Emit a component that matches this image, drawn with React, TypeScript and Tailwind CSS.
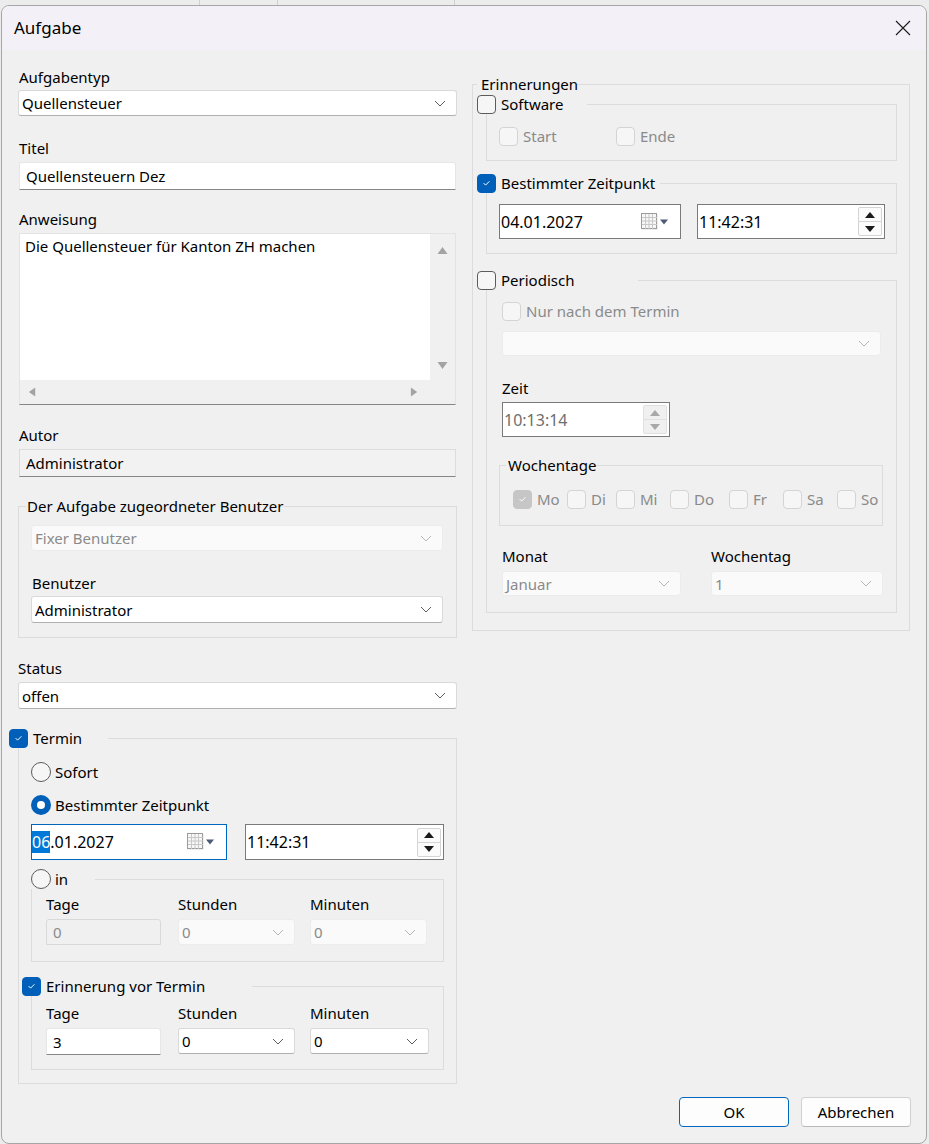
import type { ReactNode } from 'react'

function Chevron({ disabled = false }: { disabled?: boolean }) {
  return (
    <svg viewBox="0 0 12 7" className="h-[7px] w-[12px]" fill="none" stroke={disabled ? '#b8b8b8' : '#5c5c5c'} strokeWidth={1}>
      <path d="M1 1l5 5 5-5" />
    </svg>
  )
}

function Label({ children, className = '' }: { children: ReactNode; className?: string }) {
  return <div className={`h-[20px] leading-[20px] ${className}`}>{children}</div>
}

function Select({ value, disabled = false, className = '' }: { value?: string; disabled?: boolean; className?: string }) {
  return (
    <div
      className={[
        'flex items-center justify-between rounded-[3px] border pl-[3px] pr-[10px] leading-[20px]',
        disabled ? 'border-[#ececec] bg-[#fafafa] text-[#8a8a8a]' : 'border-[#d9d9d9] border-b-[#b0b0b0] bg-white',
        className,
      ].join(' ')}
    >
      <span>{value}</span>
      <Chevron disabled={disabled} />
    </div>
  )
}

function Checkbox({ checked = false, disabled = false }: { checked?: boolean; disabled?: boolean }) {
  const box = checked
    ? disabled
      ? 'border-[#c6c6c6] bg-[#c6c6c6]'
      : 'border-[#005fb8] bg-[#005fb8]'
    : disabled
      ? 'border-[#d4d4d4] bg-[#f6f6f6]'
      : 'border-[#5c5c5c] bg-[#f6f6f6]'
  return (
    <span className={`flex h-[19px] w-[19px] shrink-0 items-center justify-center rounded-[4px] border ${box}`}>
      {checked && (
        <svg viewBox="0 0 19 19" className="h-[19px] w-[19px]" fill="none" stroke="white" strokeWidth={1.1} strokeLinecap="round" strokeLinejoin="round">
          <path d="M6.6 9.4l1.9 1.9 3.9-3.9" />
        </svg>
      )}
    </span>
  )
}

function Radio({ checked = false }: { checked?: boolean }) {
  if (checked) {
    return (
      <span className="flex h-[20px] w-[20px] shrink-0 items-center justify-center rounded-full bg-[#005fb8]">
        <span className="h-[8px] w-[8px] rounded-full bg-white" />
      </span>
    )
  }
  return <span className="h-[20px] w-[20px] shrink-0 rounded-full border border-[#5c5c5c] bg-[#f6f6f6]" />
}

function Group({ title, titleClass = '', className = '', children }: { title: ReactNode; titleClass?: string; className?: string; children: ReactNode }) {
  return (
    <div className={`border border-[#dcdcdc] ${className}`}>
      <div className={`-mt-[11px] flex h-[20px] items-center whitespace-nowrap bg-[#f0f0f0] leading-[20px] ${titleClass}`}>{title}</div>
      {children}
    </div>
  )
}

function Spinner({ disabled = false }: { disabled?: boolean }) {
  const tri = disabled ? '#a8a8a8' : '#1a1a1a'
  const btn = disabled
    ? 'flex h-[15px] w-[24px] items-center justify-center border border-[#e0e0e0] bg-[#f0f0f0]'
    : 'flex h-[15px] w-[24px] items-center justify-center border border-[#d4d4d4] bg-[#fbfbfb]'
  return (
    <div className="flex flex-col">
      <div className={`${btn} rounded-t-[2px]`}>
        <svg viewBox="0 0 10 6" className="h-[6px] w-[10px]">
          <path d="M0 6L5 0L10 6Z" fill={tri} />
        </svg>
      </div>
      <div className={`${btn} -mt-px rounded-b-[2px]`}>
        <svg viewBox="0 0 10 6" className="h-[6px] w-[10px]">
          <path d="M0 0L10 0L5 6Z" fill={tri} />
        </svg>
      </div>
    </div>
  )
}

function TimeField({ value, disabled = false, className = '' }: { value: string; disabled?: boolean; className?: string }) {
  return (
    <div className={`flex items-center justify-between border border-[#7a7a7a] bg-white pl-[1px] pr-[2px] text-[16px] ${disabled ? 'text-[#6e6e6e]' : ''} ${className}`}>
      <span>{value}</span>
      <Spinner disabled={disabled} />
    </div>
  )
}

function CalendarIcon() {
  return (
    <svg viewBox="0 0 28 18" className="h-[18px] w-[28px]">
      <rect x="1.5" y="1.5" width="15" height="15" fill="#9a9a9a" opacity="0.35" />
      <rect x="0.5" y="0.5" width="15" height="15" fill="#f7f7f7" stroke="#9b9b9b" />
      <path d="M4.5 1v15M8 1v15M11.5 1v15M1 4.5h15M1 8h15M1 11.5h15" stroke="#c8c8c8" strokeWidth={1} />
      <path d="M19 6.5h8l-4 5z" fill="#4d5a78" />
    </svg>
  )
}

function DateField({ focused = false, className = '', children }: { focused?: boolean; className?: string; children: ReactNode }) {
  return (
    <div className={`flex items-center justify-between border bg-white pr-[11px] text-[16px] ${focused ? 'border-[#0067c0]' : 'border-[#7a7a7a] pl-[1px]'} ${className}`}>
      <span>{children}</span>
      <CalendarIcon />
    </div>
  )
}

function TextInput({ value, disabled = false, className = '' }: { value: string; disabled?: boolean; className?: string }) {
  return (
    <div
      className={[
        'flex items-center rounded-t-[3px] border pl-[6px] leading-[20px]',
        disabled ? 'border-[#d9d9d9] bg-[#f0f0f0] text-[#8a8a8a]' : 'border-[#e6e6e6] border-b-[#868686] bg-white',
        className,
      ].join(' ')}
    >
      {value}
    </div>
  )
}

function Arrow({ d, className }: { d: string; className: string }) {
  return (
    <svg viewBox="0 0 10 10" className={className}>
      <path d={d} fill="#a3a3a3" />
    </svg>
  )
}

function DurationRow({ disabled = false, minWide = false }: { disabled?: boolean; minWide?: boolean }) {
  return (
    <div className="pl-[14px]">
      <div className="flex">
        <Label className="w-[132px]">Tage</Label>
        <Label className="w-[132px]">Stunden</Label>
        <Label>Minuten</Label>
      </div>
      <div className="mt-[5px] flex">
        <TextInput value={disabled ? '0' : '3'} disabled={disabled} className={disabled ? 'h-[26px] w-[115px]' : 'h-[27px] w-[115px]'} />
        <Select value="0" disabled={disabled} className="ml-[17px] h-[26px] w-[117px]" />
        <Select value="0" disabled={disabled} className={minWide ? 'ml-[15px] h-[26px] w-[119px]' : 'ml-[15px] h-[26px] w-[117px]'} />
      </div>
    </div>
  )
}

function LeftColumn() {
  return (
    <div className="flex w-[439px] shrink-0 flex-col">
      <Label className="pl-[1px]">Aufgabentyp</Label>
      <Select value="Quellensteuer" className="mt-[3px] h-[26px]" />

      <Label className="mt-[22px] pl-[1px]">Titel</Label>
      <TextInput value="Quellensteuern Dez" className="ml-[1px] mr-[1px] mt-[4px] h-[28px]" />

      <Label className="mt-[19px] pl-[1px]">Anweisung</Label>
      <div className="ml-[1px] mr-[1px] mt-[4px] flex h-[172px] flex-col border border-[#e3e3e3] border-b-[#868686] bg-[#f0f0f0]">
        <div className="flex min-h-0 flex-1">
          <div className="flex-1 bg-white pl-[5px] pt-[2px] leading-[20px]">Die Quellensteuer für Kanton ZH machen</div>
          <div className="flex w-[25px] flex-col items-center justify-between pb-[10px] pt-[12px]">
            <Arrow d="M0 8L5 1L10 8Z" className="h-[10px] w-[11px]" />
            <Arrow d="M0 2L10 2L5 9Z" className="h-[10px] w-[11px]" />
          </div>
        </div>
        <div className="flex h-[24px] items-center justify-between pl-[8px] pr-[36px]">
          <Arrow d="M8 0L8 10L1 5Z" className="h-[10px] w-[9px]" />
          <Arrow d="M1 0L1 10L8 5Z" className="h-[10px] w-[9px]" />
        </div>
      </div>

      <Label className="mt-[20px] pl-[1px]">Autor</Label>
      <div className="ml-[1px] mr-[1px] mt-[4px] flex h-[28px] items-center border border-[#dcdcdc] border-b-[#868686] bg-[#f2f2f2] pl-[6px]">Administrator</div>

      <Group
        className="mt-[29px] pb-[14px] pl-[12px] pr-[13px]"
        titleClass="-ml-[5px] w-[258px] pl-[1px]"
        title="Der Aufgabe zugeordneter Benutzer"
      >
        <Select value="Fixer Benutzer" disabled className="mt-[9px] h-[26px]" />
        <Label className="mt-[22px] pl-[1px]">Benutzer</Label>
        <Select value="Administrator" className="mt-[3px] h-[27px]" />
      </Group>

      <Label className="mt-[20px]">Status</Label>
      <Select value="offen" className="mt-[4px] h-[27px]" />

      <Group
        className="mt-[29px] pb-[13px] pl-[12px] pr-[12px]"
        titleClass="-ml-[22px] w-[99px] gap-[5px]"
        title={
          <>
            <Checkbox checked />
            <span>Termin</span>
          </>
        }
      >
        <div className="mt-[14px] flex h-[20px] items-center gap-[4px]">
          <Radio />
          <span>Sofort</span>
        </div>
        <div className="mt-[13px] flex h-[20px] items-center gap-[4px]">
          <Radio checked />
          <span>Bestimmter Zeitpunkt</span>
        </div>
        <div className="mt-[9px] flex gap-[18px]">
          <DateField focused className="h-[36px] w-[196px]">
            <span className="bg-[#0078d7] text-white">06</span>.01.2027
          </DateField>
          <TimeField value="11:42:31" className="h-[36px] flex-1" />
        </div>

        <Group
          className="mt-[19px] pb-[16px]"
          titleClass="-ml-[1px] w-[64px] gap-[4px]"
          title={
            <>
              <Radio />
              <span>in</span>
            </>
          }
        >
          <div className="mt-[5px]">
            <DurationRow disabled />
          </div>
        </Group>

        <Group
          className="mt-[24px] pb-[14px]"
          titleClass="-ml-[10px] w-[230px] gap-[5px]"
          title={
            <>
              <Checkbox checked />
              <span>Erinnerung vor Termin</span>
            </>
          }
        >
          <div className="mt-[7px]">
            <DurationRow minWide />
          </div>
        </Group>
      </Group>
    </div>
  )
}

const DAYS: { name: string; width: string; checked?: boolean }[] = [
  { name: 'Mo', width: 'w-[54px]', checked: true },
  { name: 'Di', width: 'w-[49px]' },
  { name: 'Mi', width: 'w-[54px]' },
  { name: 'Do', width: 'w-[59px]' },
  { name: 'Fr', width: 'w-[54px]' },
  { name: 'Sa', width: 'w-[54px]' },
  { name: 'So', width: 'w-[40px]' },
]

function RightColumn() {
  return (
    <div className="w-[438px] shrink-0">
      <Group className="mt-[17px] pb-[17px]" titleClass="ml-[4px] w-[100px] pl-[4px]" title="Erinnerungen">
        <Group
          className="ml-[13px] mr-[12px] mt-[10px] pb-[14px] pl-[12px]"
          titleClass="-ml-[22px] w-[110px] gap-[5px]"
          title={
            <>
              <Checkbox />
              <span>Software</span>
            </>
          }
        >
          <div className="mt-[12px] flex h-[20px] items-center">
            <div className="flex w-[117px] items-center gap-[5px] text-[#8a8a8a]">
              <Checkbox disabled />
              <span>Start</span>
            </div>
            <div className="flex items-center gap-[5px] text-[#8a8a8a]">
              <Checkbox disabled />
              <span>Ende</span>
            </div>
          </div>
        </Group>

        <Group
          className="ml-[13px] mr-[12px] mt-[22px] pb-[14px] pl-[12px]"
          titleClass="-ml-[22px] w-[183px] gap-[5px]"
          title={
            <>
              <Checkbox checked />
              <span>Bestimmter Zeitpunkt</span>
            </>
          }
        >
          <div className="mt-[11px] flex gap-[16px]">
            <DateField className="h-[35px] w-[182px]">04.01.2027</DateField>
            <TimeField value="11:42:31" className="h-[35px] w-[188px]" />
          </div>
        </Group>

        <Group
          className="ml-[13px] mr-[12px] mt-[26px] pb-[16px] pl-[15px] pr-[15px]"
          titleClass="-ml-[25px] w-[161px] gap-[5px]"
          title={
            <>
              <Checkbox />
              <span>Periodisch</span>
            </>
          }
        >
          <div className="mt-[11px] flex h-[20px] items-center gap-[5px] text-[#8a8a8a]">
            <Checkbox disabled />
            <span>Nur nach dem Termin</span>
          </div>
          <Select disabled className="mt-[10px] h-[25px]" />
          <Label className="mt-[22px]">Zeit</Label>
          <TimeField value="10:13:14" disabled className="mt-[4px] h-[35px] w-[168px]" />

          <Group className="-ml-[3px] -mr-[2px] mt-[28px] pb-[16px] pl-[13px]" titleClass="-ml-[7px] w-[88px] pl-[2px]" title="Wochentage">
            <div className="mt-[14px] flex h-[20px] items-center">
              {DAYS.map((d) => (
                <div key={d.name} className={`flex items-center gap-[5px] text-[#8a8a8a] ${d.width}`}>
                  <Checkbox checked={d.checked} disabled />
                  <span>{d.name}</span>
                </div>
              ))}
            </div>
          </Group>

          <div className="mt-[20px] flex">
            <Label className="w-[209px]">Monat</Label>
            <Label>Wochentag</Label>
          </div>
          <div className="-mr-[2px] mt-[5px] flex">
            <Select value="Januar" disabled className="h-[25px] w-[179px]" />
            <Select value="1" disabled className="ml-[30px] h-[25px] flex-1" />
          </div>
        </Group>
      </Group>
    </div>
  )
}

export default function App() {
  return (
    <div className="h-[1144px] w-[929px] overflow-hidden bg-[#ececec] font-['Noto_Sans',sans-serif] text-[15px] text-black">
      <div className="flex h-[5px]">
        <div className="w-[200px] border-r border-[#d0d0d0]" />
        <div className="w-[78px] border-r border-[#d0d0d0]" />
        <div className="w-[177px] border-r border-[#d0d0d0]" />
      </div>
      <div className="ml-[1px] flex h-[1139px] w-[926px] flex-col overflow-hidden rounded-[8px] border border-[#a6a6a6] bg-[#f0f0f0]">
        <div className="flex h-[44px] shrink-0 items-center justify-between bg-[#f3f1f7] pl-[12px] pr-[15px]">
          <span className="text-[17px]">Aufgabe</span>
          <svg viewBox="0 0 16 16" className="h-[16px] w-[16px]" fill="none" stroke="#1a1a1a" strokeWidth={1.1}>
            <path d="M1 1l14 14M15 1L1 15" />
          </svg>
        </div>

        <div className="flex items-start gap-[15px] pl-[16px] pr-[15px] pt-[17px]">
          <LeftColumn />
          <RightColumn />
        </div>

        <div className="mt-[13px] flex justify-end gap-[12px] pr-[15px]">
          <button className="h-[30px] w-[110px] rounded-[4px] border border-[#0067c0] bg-[#fdfdfd]">OK</button>
          <button className="h-[30px] w-[110px] rounded-[4px] border border-[#d0d0d0] border-b-[#b8b8b8] bg-[#fdfdfd]">Abbrechen</button>
        </div>
      </div>
    </div>
  )
}
